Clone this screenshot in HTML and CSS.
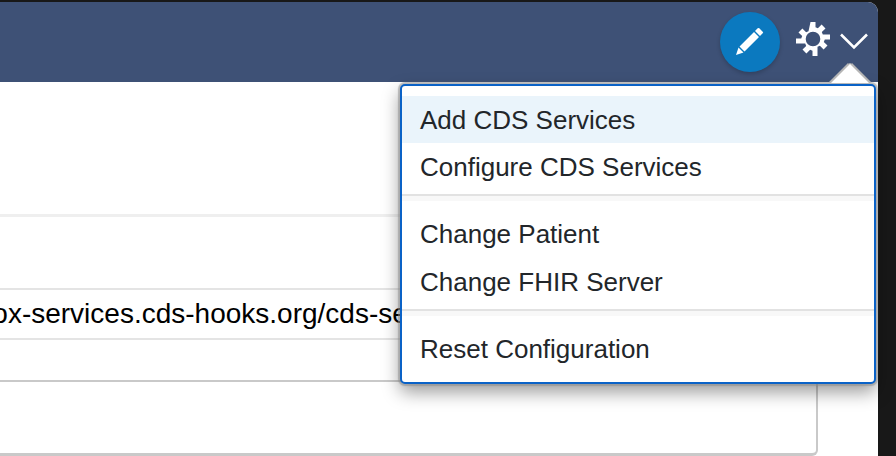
FILE: index.html
```html
<!DOCTYPE html>
<html lang="en">
<head>
<meta charset="utf-8">
<title>CDS Hooks Sandbox</title>
<link rel="stylesheet" href="styles.css">
</head>
<body>
<div class="window">
  <header class="header">
    <button class="pencil" aria-label="Edit">
      <svg width="30" height="30" viewBox="0 0 30 30"><path fill="#fff" d="M1 28l2.500-7.500 5 5zM4.500 19.500L19 5l5 5L9.500 24.500zM20 4l2.700-2.700a1.100 1.100 0 0 1 1.600 0l3.400 3.400a1.100 1.100 0 0 1 0 1.600L25 9z"/></svg>
    </button>
    <svg class="gear" width="36" height="36" viewBox="0 0 36 36"><path fill="#fff" fill-rule="evenodd" d="M15.500 1h5v5.200l2.400 1 3.700-3.700 3.900 3.900-3.700 3.700 1 2.400H35v5h-5.200l-1 2.400 3.700 3.700-3.900 3.900-3.700-3.700-2.400 1V35h-5v-5.200l-2.400-1-3.700 3.700-3.900-3.900 3.700-3.700-1-2.400H1v-5h5.200l1-2.400-3.700-3.700 3.900-3.900 3.700 3.700 2.400-1zM18 10.700a7.300 7.300 0 1 0 0 14.600 7.300 7.300 0 0 0 0-14.600z"/></svg>
    <svg class="chevron" width="30" height="18" viewBox="0 0 30 18"><path fill="none" stroke="#fff" stroke-width="2.600" d="M2 2.500l13 13 13-13"/></svg>
  </header>
  <main class="content">
    <div class="panel">
      <div class="row row-top"></div>
      <div class="row row-url"><span class="url">https://sandbox-services.cds-hooks.org/cds-services</span></div>
      <div class="row row-help"></div>
    </div>
  </main>
  <nav class="menu">
    <span class="caret"></span>
    <div class="menu-group">
      <a class="item item-active">Add CDS Services</a>
      <a class="item">Configure CDS Services</a>
    </div>
    <div class="divider divider-first"></div>
    <div class="menu-group">
      <a class="item">Change Patient</a>
      <a class="item">Change FHIR Server</a>
    </div>
    <div class="divider"></div>
    <div class="menu-group">
      <a class="item">Reset Configuration</a>
    </div>
  </nav>
</div>
</body>
</html>
```
FILE: styles.css
```css
* { box-sizing: border-box; }
html, body { margin: 0; height: 456px; overflow: hidden; background: #181818; }
body { font-family: "Liberation Sans", Arial, sans-serif; padding-top: 2px; }
.window {
  position: relative;
  width: 878px;
  height: 454px;
  background: #fff;
  border-top-right-radius: 10px;
  display: flex;
  flex-direction: column;
}
.header {
  height: 80px;
  flex: none;
  background: #3e5176;
  border-top-right-radius: 10px;
  display: flex;
  align-items: center;
  justify-content: flex-end;
  padding: 0 9px 0 0;
}
.pencil {
  width: 60px;
  height: 60px;
  border: 0;
  border-radius: 50%;
  background: #0b79bf;
  box-shadow: 0 2px 4px rgba(0,0,0,.2);
  padding: 0;
  margin-right: 15px;
  display: flex;
  align-items: center;
  justify-content: center;
}
.gear { margin-right: 8px; margin-top: -6px; }
.chevron { margin-top: -2px; }
.content { flex: 1; background: #fff; padding-top: 132px; }
.panel {
  width: 818px;
  height: 242px;
  border-right: 2px solid #c9c9c9;
  border-bottom: 3px solid #c9c9c9;
  border-bottom-right-radius: 6px;
  border-top: 3px solid #efefef;
}
.row { height: 0; }
.row-top { height: 73px; border-bottom: 2px solid #e4e4e4; }
.row-url {
  height: 50px;
  border-bottom: 2px solid #e4e4e4;
  overflow: hidden;
  white-space: nowrap;
  font-size: 28px;
  line-height: 48px;
  color: #000;
}
.url { display: block; margin-left: -168px; }
.row-help { height: 42px; border-bottom: 2px solid #c9c9c9; }
.menu {
  position: absolute;
  left: 400px;
  top: 82px;
  width: 476px;
  height: 300px;
  background: #fff;
  border: 2px solid #0a62c7;
  border-radius: 5px;
  box-shadow: 0 0 1px 2px rgba(140,140,140,.55), 0 8px 18px rgba(0,0,0,.4);
  padding-top: 10px;
  font-size: 26px;
  color: #22262a;
}
.caret {
  position: absolute;
  top: -22px;
  left: 429px;
  width: 0;
  height: 0;
  border-left: 19px solid transparent;
  border-right: 19px solid transparent;
  border-bottom: 19px solid #fff;
  filter: drop-shadow(-2px 0 0 #b5b5b5) drop-shadow(2px 0 0 #b5b5b5) drop-shadow(0 -1px 0 #b5b5b5);
}
.item {
  display: block;
  height: 47.5px;
  line-height: 47.5px;
  padding-left: 18px;
  white-space: nowrap;
}
.item-active { height: 47px; line-height: 48px; background: #eaf4fb; }
.item-active + .item { line-height: 49px; }
.divider { height: 7px; margin: 3px 0 9.5px; border-top: 2px solid #e2e2e2; background: #f8f8f8; }
.divider-first { margin: 3.5px 0 10px; }
```
